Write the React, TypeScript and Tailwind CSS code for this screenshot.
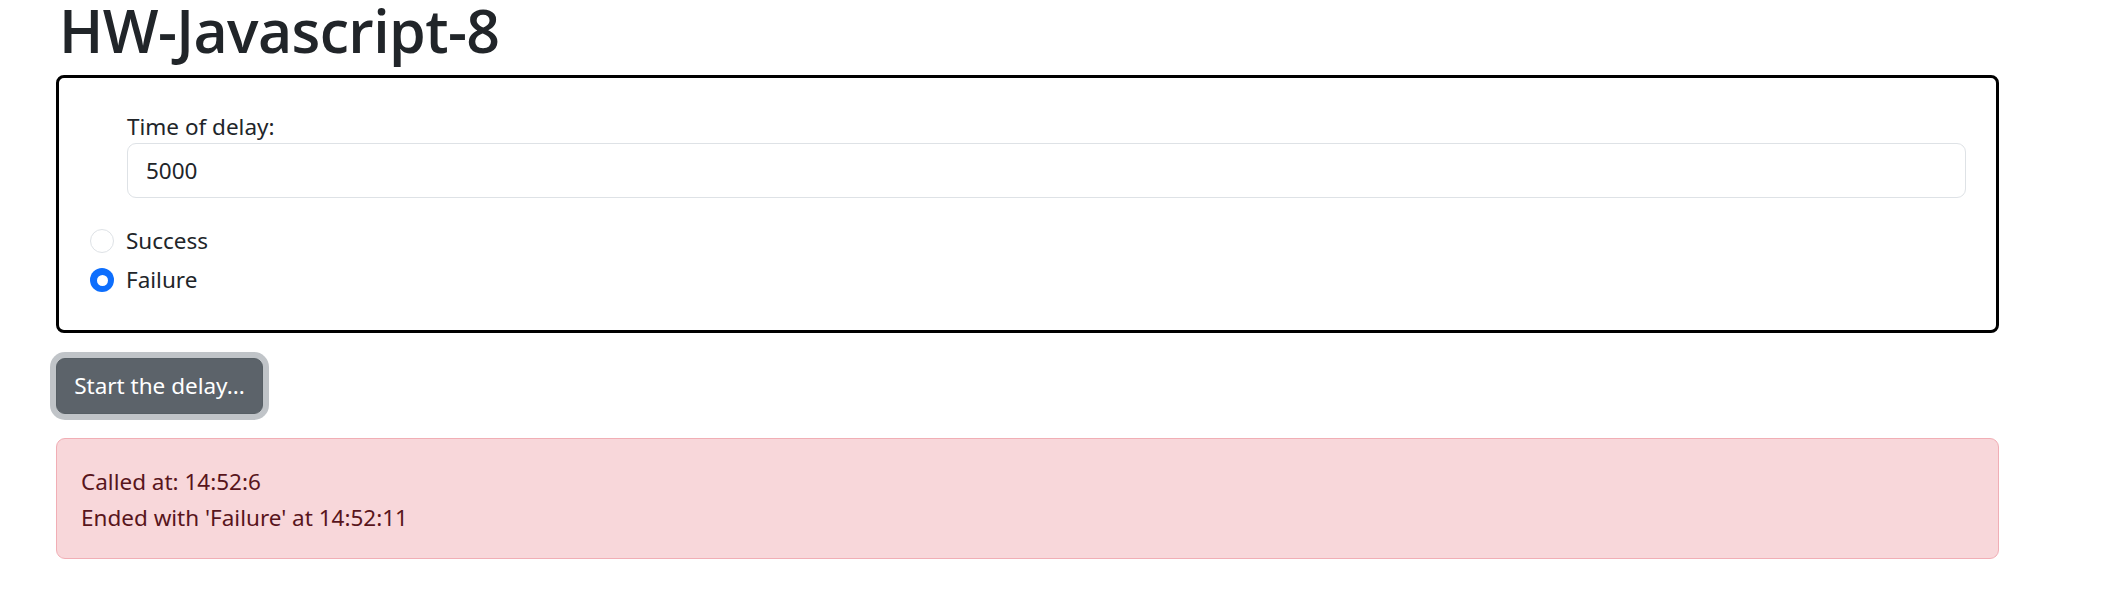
import { useState } from "react";

// Delay demo: a bordered form with a delay input and success/failure choice,
// a start button and an alert that reports the outcome.

const FONT = "font-['Noto_Sans','Open_Sans',sans-serif]";

function Radio({ label, checked, onSelect }: { label: string; checked: boolean; onSelect: () => void }) {
  return (
    <label className="flex h-[36px] cursor-pointer items-start gap-[12px]" onClick={onSelect}>
      <span
        className={
          checked
            ? "mt-[6px] flex h-[24px] w-[24px] items-center justify-center rounded-full bg-[#0d6efd]"
            : "mt-[6px] h-[24px] w-[24px] rounded-full border-[1.5px] border-[#dee2e6] bg-white"
        }
      >
        {checked && <span className="h-[11px] w-[11px] rounded-full bg-white" />}
      </span>
      <span className="text-[22.5px] leading-[36px] text-[#212529]">{label}</span>
    </label>
  );
}

export default function App() {
  const [delay, setDelay] = useState("5000");
  const [outcome, setOutcome] = useState<"Success" | "Failure">("Failure");

  return (
    <div className={`${FONT} min-h-screen bg-white pl-[56px] text-[#212529]`}>
      <h1 className="mb-[15px] pl-[3px] font-['Open_Sans','Noto_Sans',sans-serif] text-[59px] font-semibold leading-[60px] tracking-[-0.6px] text-[#212529]">
        HW-Javascript-8
      </h1>

      <div className="w-[1943px] rounded-[8px] border-[3px] border-black pt-[33px] pb-[32px] pl-[31px] pr-[30px]">
        <div className="ml-[37px]">
          <label className="block text-[22.5px] leading-[32px]">Time of delay:</label>
          <input
            value={delay}
            onChange={(e) => setDelay(e.target.value)}
            className="block h-[55px] w-full rounded-[9px] border-[1.5px] border-[#dee2e6] bg-white px-[18px] text-[22.5px] text-[#212529] outline-none"
          />
        </div>
        <div className="mt-[25px] flex flex-col gap-[3px]">
          <Radio label="Success" checked={outcome === "Success"} onSelect={() => setOutcome("Success")} />
          <Radio label="Failure" checked={outcome === "Failure"} onSelect={() => setOutcome("Failure")} />
        </div>
      </div>

      <button className="mt-[25px] h-[56px] w-[207px] rounded-[9px] border-[1.5px] border-[#565e64] bg-[#5c636a] text-[22.5px] leading-[36px] text-white shadow-[0_0_0_6px_rgba(130,138,145,0.5)]">
        Start the delay...
      </button>

      <div className="mt-[24px] w-[1943px] rounded-[9px] border border-[#f1aeb5] bg-[#f8d7da] pt-[25px] pb-[22px] pl-[24px] text-[22.5px] leading-[36px] text-[#58151c]">
        <div>Called at: 14:52:6</div>
        <div>Ended with '{outcome}' at 14:52:11</div>
      </div>
    </div>
  );
}
